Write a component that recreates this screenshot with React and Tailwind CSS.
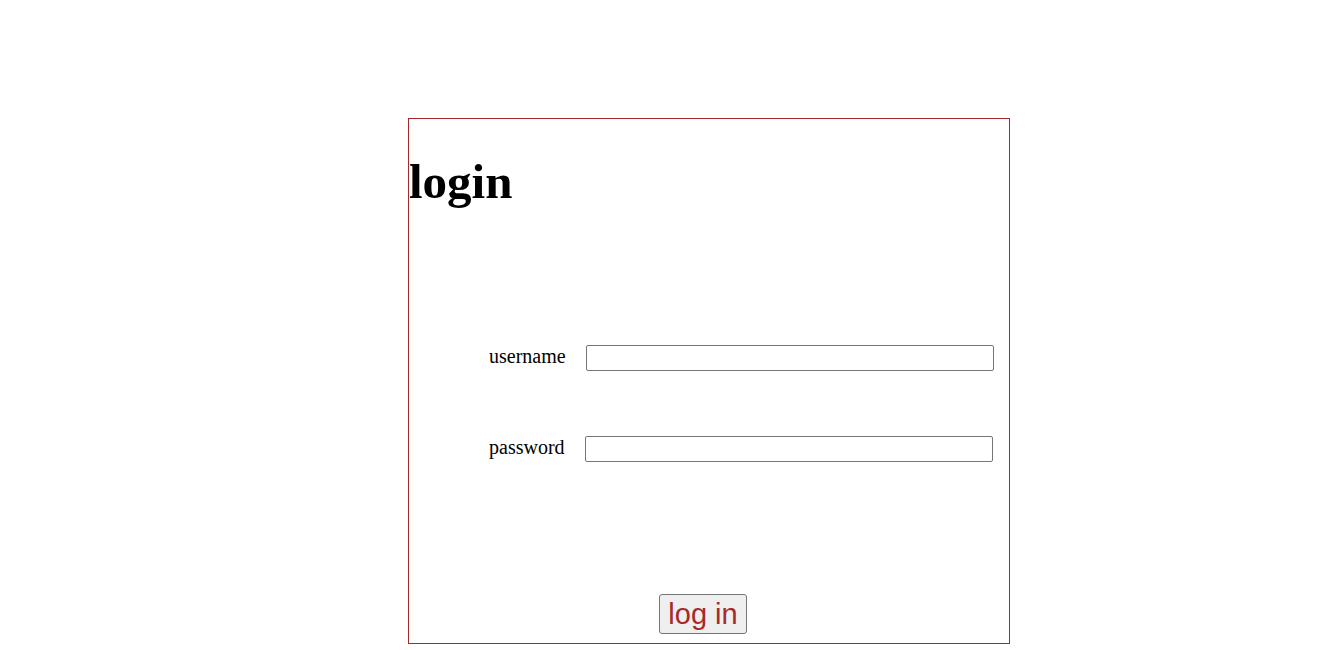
export default function App() {
  return (
    <div className="min-h-[650px] w-full bg-white pt-[118px]" style={{ fontFamily: '"Liberation Serif", serif' }}>
      <div className="ml-[408px] flex h-[526px] w-[602px] flex-col border border-[#a52a2a]">
        <h1 className="mt-[35px] text-[49px] font-bold leading-[56px] text-black">login</h1>
        <div className="mt-[135px] flex items-start pl-[80px]">
          <label className="mt-[1px] w-[97px] text-[20px] leading-[20px] text-black">username</label>
          <input type="text" className="h-[26px] w-[408px] rounded-[2px] border border-[#767676] bg-white px-[2px] outline-none" />
        </div>
        <div className="mt-[65px] flex items-start pl-[80px]">
          <label className="mt-[1px] w-[96px] text-[20px] leading-[20px] text-black">password</label>
          <input type="password" className="h-[26px] w-[408px] rounded-[2px] border border-[#767676] bg-white px-[2px] outline-none" />
        </div>
        <div className="mt-[132px] pl-[250px]">
          <button
            type="button"
            className="flex h-[40px] w-[88px] items-center justify-center rounded-[3px] border border-[#767676] bg-[#efefef] text-[29px] leading-none text-[#a52a2a]"
            style={{ fontFamily: '"Liberation Sans", Arial, sans-serif' }}
          >
            log in
          </button>
        </div>
      </div>
    </div>
  );
}
